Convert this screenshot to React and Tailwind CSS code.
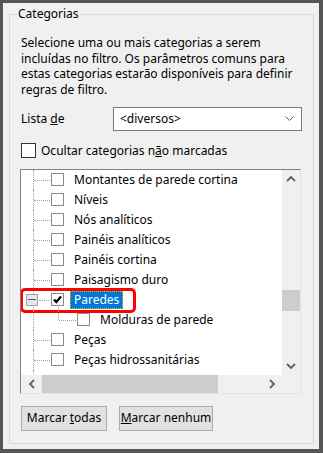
import React from "react";

const font = { fontFamily: '"Noto Sans", "Open Sans", sans-serif' };

const items = [
  { label: "Montantes de parede cortina" },
  { label: "Níveis" },
  { label: "Nós analíticos" },
  { label: "Painéis analíticos" },
  { label: "Painéis cortina" },
  { label: "Paisagismo duro" },
  { label: "Paredes", checked: true, selected: true, expander: true },
  { label: "Molduras de parede", child: true },
  { label: "Peças" },
  { label: "Peças hidrossanitárias" },
];

function Box({ checked }) {
  return (
    <span className="w-[13px] h-[13px] border border-[#8a8a8a] bg-white flex items-center justify-center shrink-0">
      {checked && (
        <svg width="9" height="9" viewBox="0 0 9 9">
          <path d="M1 4.5 L3.3 7 L8 1.5" fill="none" stroke="#000" strokeWidth="2.2" />
        </svg>
      )}
    </span>
  );
}

function Chevron({ dir }) {
  const d = {
    up: "M1 6 L5 2 L9 6",
    down: "M1 2 L5 6 L9 2",
    left: "M6 1 L2 5 L6 9",
    right: "M2 1 L6 5 L2 9",
  }[dir];
  const vertical = dir === "up" || dir === "down";
  return (
    <svg
      width={vertical ? 10 : 8}
      height={vertical ? 8 : 10}
      viewBox={vertical ? "0 0 10 8" : "0 0 8 10"}
    >
      <path d={d} fill="none" stroke="#606060" strokeWidth="1.8" />
    </svg>
  );
}

function Row({ item }) {
  return (
    <div className="relative h-[20px] flex items-center shrink-0">
      {/* tree guide lines */}
      <span className="absolute left-[12px] top-0 h-[20px] border-l border-dotted border-[#a0a0a0]" />
      {item.expander ? (
        <>
          <span className="absolute left-[5px] top-[4px] w-[12px] h-[12px] border border-[#a0a0a0] bg-[#e6e6e6] flex items-center justify-center">
            <span className="w-[8px] h-[1px] bg-[#2c5fa8]" />
          </span>
          <span className="absolute left-[18px] top-[10px] w-[10px] border-t border-dotted border-[#a0a0a0]" />
          <span className="absolute left-[37px] top-[15px] h-[5px] border-l border-dotted border-[#a0a0a0]" />
        </>
      ) : item.child ? (
        <>
          <span className="absolute left-[37px] top-0 h-[10px] border-l border-dotted border-[#a0a0a0]" />
          <span className="absolute left-[38px] top-[10px] w-[17px] border-t border-dotted border-[#a0a0a0]" />
        </>
      ) : (
        <span className="absolute left-[13px] top-[10px] w-[16px] border-t border-dotted border-[#a0a0a0]" />
      )}
      <div className={item.child ? "ml-[56px] flex items-center" : "ml-[30px] flex items-center"}>
        <Box checked={item.checked} />
        {item.selected ? (
          <span className="ml-[6px] h-[18px] px-[3px] flex items-center bg-[#0078d7] text-white border border-dotted border-[#ffb000] whitespace-nowrap">
            {item.label}
          </span>
        ) : (
          <span className="ml-[10px] whitespace-nowrap text-black">{item.label}</span>
        )}
      </div>
      {item.selected && (
        <span className="absolute left-[-1px] top-[-2px] w-[116px] h-[25px] border-[3px] border-[#ff0000] rounded-[5px]" />
      )}
    </div>
  );
}

export default function App() {
  return (
    <div
      className="w-[323px] h-[453px] bg-[#f0f0f0] border-l-[3px] border-t-[3px] border-r-[4px] border-b-[4px] border-[#555555] text-[12px] text-black overflow-hidden"
      style={font}
    >
      <div className="relative ml-[6px] mr-[5px] mt-[11px] h-[430px] border border-[#d9d9d9]">
        <span className="absolute left-[7px] top-[-10px] px-[1px] bg-[#f0f0f0] leading-[18px]">
          Categorias
        </span>

        <div className="pl-[11px] pr-[11px] pt-[20px]">
          <p className="leading-[15.67px]">
            Selecione uma ou mais categorias a serem incluídas no filtro. Os parâmetros comuns para
            estas categorias estarão disponíveis para definir regras de filtro.
          </p>

          <div className="mt-[9px] flex items-center">
            <span className="w-[92px]">
              Lista <span className="underline">d</span>e
            </span>
            <div className="flex-1 h-[24px] bg-white border border-[#7a7a7a] flex items-center justify-between pl-[6px] pr-[7px]">
              <span>&lt;diversos&gt;</span>
              <svg width="9" height="6" viewBox="0 0 9 6">
                <path d="M0.5 0.5 L4.5 4.5 L8.5 0.5" fill="none" stroke="#606060" strokeWidth="1" />
              </svg>
            </div>
          </div>

          <div className="mt-[11px] flex items-center">
            <span className="w-[15px] h-[15px] border border-[#333333] bg-white shrink-0" />
            <span className="ml-[5px]">
              Ocultar categorias n<span className="underline">ã</span>o marcadas
            </span>
          </div>

          <div className="mt-[9px] -ml-[1px] w-[281px] h-[225px] border border-t-[#828282] border-l-[#828282] border-r-[#e3e3e3] border-b-[#e3e3e3] flex flex-col bg-white">
            <div className="flex h-[205px] min-h-0 overflow-hidden shrink-0">
              <div className="flex-1 flex flex-col overflow-hidden">
                {items.map((it) => (
                  <Row key={it.label} item={it} />
                ))}
                <div className="relative h-[20px] shrink-0">
                  <span className="absolute left-[12px] top-0 h-[20px] border-l border-dotted border-[#a0a0a0]" />
                </div>
              </div>
              <div className="w-[18px] bg-[#f0f0f0] flex flex-col items-center">
                <div className="h-[18px] flex items-center justify-center">
                  <Chevron dir="up" />
                </div>
                <div className="h-[102px]" />
                <div className="w-full h-[21px] bg-[#cdcdcd]" />
                <div className="flex-1" />
                <div className="h-[18px] flex items-center justify-center">
                  <Chevron dir="down" />
                </div>
              </div>
            </div>
            <div className="h-[18px] flex bg-[#f0f0f0] shrink-0">
              <div className="w-[21px] flex items-center justify-center">
                <Chevron dir="left" />
              </div>
              <div className="w-[176px] bg-[#cdcdcd]" />
              <div className="flex-1" />
              <div className="w-[21px] flex items-center justify-center">
                <Chevron dir="right" />
              </div>
              <div className="w-[18px]" />
            </div>
          </div>

          <div className="mt-[12px] flex gap-[12px]">
            <button className="w-[86px] h-[25px] bg-[#e1e1e1] border border-[#adadad]">
              Marcar <span className="underline">t</span>odas
            </button>
            <button className="w-[94px] h-[25px] bg-[#e1e1e1] border border-[#adadad]">
              <span className="underline">M</span>arcar nenhum
            </button>
          </div>
        </div>
      </div>
    </div>
  );
}
